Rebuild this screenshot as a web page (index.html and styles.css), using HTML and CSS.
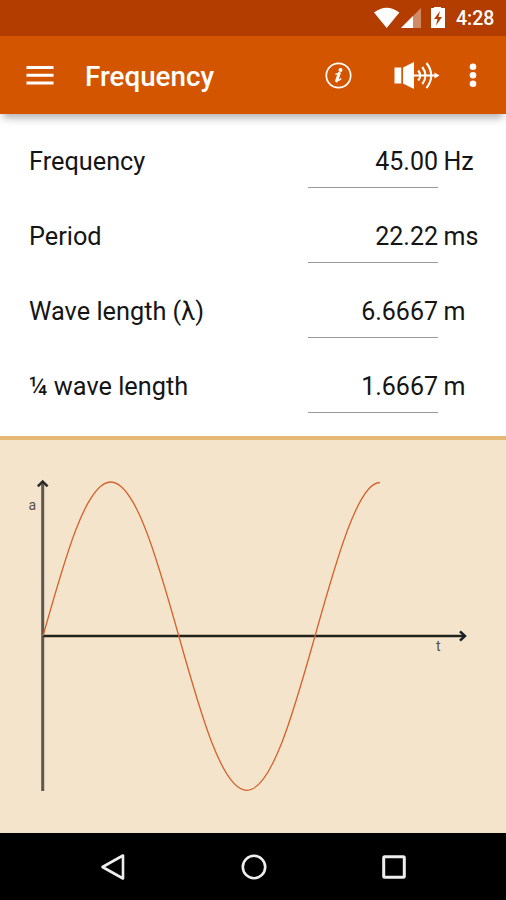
FILE: index.html
```html
<!DOCTYPE html>
<html lang="en">
<head>
  <meta charset="UTF-8" />
  <meta name="viewport" content="width=device-width, initial-scale=1.0">
  <title>Frequency</title>
  <link rel="stylesheet" href="styles.css">
</head>
<body>

<div class="screen">
  <!-- Status bar -->
  <div class="status-bar">
    <svg class="status-icons" width="82" height="36" viewBox="0 0 82 36">
      <path d="M0 12.500Q12.700 3 25.400 12.500L12.700 28z" fill="#fff"/>
      <path d="M47 8V28H27z" fill="#fff" opacity=".4"/>
      <path d="M39 16V28H27z" fill="#fff"/>
      <path d="M60 8V7h7v1h4v20H57V8z" fill="#fff"/>
      <path d="M66 11L60 19h3.500L62 25.500L68 17h-3.500z" fill="#b33c00"/>
    </svg>
    <span class="clock">4:28</span>
  </div>

  <!-- App bar -->
  <header class="app-bar">
    <svg class="menu-icon" width="28" height="20" viewBox="0 0 28 20">
      <path d="M.5 2.500h27M.5 10.200h27M.5 17.900h27" stroke="#fff" stroke-width="3"/>
    </svg>
    <h1>Frequency</h1>
    <svg class="info-icon" width="28" height="28" viewBox="0 0 28 28">
      <circle cx="14.500" cy="14.500" r="12.200" fill="none" stroke="#fff" stroke-width="1.700"/>
      <circle cx="16.500" cy="9" r="2" fill="#fff"/>
      <path d="M11.300 13.500Q13.500 12.500 15.900 12.200L13.300 19.700Q15 19.700 17.300 17.500" fill="none" stroke="#fff" stroke-width="1.300"/>
      <path d="M15.100 12.500L12.500 20" stroke="#fff" stroke-width="2.800" stroke-linecap="round"/>
    </svg>
    <svg class="sound-icon" width="46" height="28" viewBox="0 0 46 28">
      <path d="M.5 6.500h6.800v16H.5zM9 6.500L20 1V28L9 22.500z" fill="#fff"/>
      <path d="M19 14.500h22M24.200 9.500Q28.200 14.500 24.200 19.500M28.300 6Q34.600 14.500 28.300 23M32.500 2Q42 14.500 32.500 27" fill="none" stroke="#fff" stroke-width="2.100"/>
      <path d="M40.500 11.500L45.500 14.500L40.500 17.500z" fill="#fff"/>
    </svg>
    <svg class="more-icon" width="8" height="26" viewBox="0 0 8 26">
      <g fill="#fff">
        <circle cx="4" cy="4.700" r="3.300"/>
        <circle cx="4" cy="13.200" r="3.300"/>
        <circle cx="4" cy="21.700" r="3.300"/>
      </g>
    </svg>
  </header>

  <!-- Values -->
  <main class="values">
    <div class="row">
      <span class="label">Frequency</span>
      <span class="value">45.00</span>
      <span class="unit">Hz</span>
    </div>
    <div class="row">
      <span class="label">Period</span>
      <span class="value">22.22</span>
      <span class="unit">ms</span>
    </div>
    <div class="row">
      <span class="label">Wave length (λ)</span>
      <span class="value">6.6667</span>
      <span class="unit">m</span>
    </div>
    <div class="row">
      <span class="label">¼ wave length</span>
      <span class="value">1.6667</span>
      <span class="unit">m</span>
    </div>
  </main>

  <!-- Wave graph -->
  <div class="graph">
    <svg width="506" height="393" viewBox="0 440 506 393">
      <path d="M42.700 482V791" stroke="#5c574f" stroke-width="3"/>
      <path d="M37.800 486.300L42.700 481.500L47.600 486.300" fill="none" stroke="#2b2b28" stroke-width="2.500"/>
      <path d="M43 636H465" stroke="#22231d" stroke-width="2.400"/>
      <path d="M460 631.300L465 636L460 640.700" fill="none" stroke="#182028" stroke-width="2.500"/>
      <path d="M43 636C65.100 557.100 86.200 482 110.700 482S156.700 557.100 178.800 636S222.300 790.300 246.800 790.300S292.900 714.900 315 636S358.500 482 380 482.500" fill="none" stroke="#d4622a" stroke-width="1.300"/>
      <text class="axis-label" x="28.500" y="510">a</text>
      <text class="axis-label" x="436" y="650.500">t</text>
    </svg>
  </div>

  <!-- Navigation bar -->
  <nav class="nav-bar">
    <svg width="28" height="30" viewBox="0 0 28 30">
      <path d="M24 3.500V26.500L3.500 15z" fill="none" stroke="#eee" stroke-width="2.600" stroke-linejoin="round"/>
    </svg>
    <svg width="28" height="30" viewBox="0 0 28 30">
      <circle cx="14" cy="15" r="11.200" fill="none" stroke="#eee" stroke-width="2.600"/>
    </svg>
    <svg width="28" height="30" viewBox="0 0 28 30">
      <rect x="3.700" y="4.700" width="20.600" height="20.600" rx="1" fill="none" stroke="#eee" stroke-width="3"/>
    </svg>
  </nav>
</div>

</body>
</html>
```
FILE: styles.css
```css
body {
  margin: 0;
  padding: 0;
  font-family: Roboto, sans-serif;
  background-color: #ffffff;
}

.screen {
  display: flex;
  flex-direction: column;
  width: 506px;
  height: 900px;
  overflow: hidden;
}

.status-bar {
  display: flex;
  align-items: center;
  justify-content: flex-end;
  height: 36px;
  padding-right: 11px;
  background-color: #b33c00;
}

.clock {
  width: 39px;
  color: #ffffff;
  font-size: 19.5px;
  font-weight: 500;
  line-height: 36px;
  padding-top: 2px;
}

.app-bar {
  display: flex;
  align-items: center;
  height: 78px;
  padding: 0 29px 0 26px;
  background-color: #d45500;
  box-shadow: 0 7px 8px -3px rgba(0, 0, 0, 0.3);
  z-index: 1;
}

h1 {
  flex: 1;
  margin: 2px 0 0 31px;
  color: #ffffff;
  font-size: 27.8px;
  font-weight: 500;
}

.sound-icon {
  margin-left: 42px;
}

.more-icon {
  margin-left: 29px;
}

.values {
  box-sizing: border-box;
  height: 322px;
  padding: 10px 0 0 29px;
  background-color: #ffffff;
}

.row {
  display: flex;
  height: 75px;
  color: #151515;
  font-size: 25px;
  line-height: 76px;
}

.label {
  width: 279px;
  font-size: 25.3px;
}

.value {
  box-sizing: border-box;
  width: 130px;
  height: 64px;
  border-bottom: 1.5px solid #999999;
  text-align: right;
}

.unit {
  margin-left: 5.5px;
}

.graph {
  box-sizing: border-box;
  height: 397px;
  border-top: 4px solid #e5b873;
  background-color: #f4e4cb;
}

.graph svg {
  display: block;
}

.axis-label {
  fill: #55504a;
  font-size: 14px;
}

.nav-bar {
  display: flex;
  align-items: center;
  justify-content: space-between;
  height: 67px;
  padding: 0 98px 0 99px;
  background-color: #000000;
}
```
